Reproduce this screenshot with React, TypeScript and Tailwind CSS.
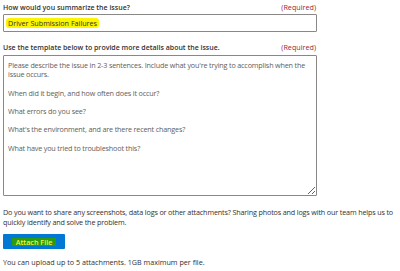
const template =
  "Please describe the issue in 2-3 sentences. Include what you're trying to accomplish when the issue occurs.\n\n" +
  "When did it begin, and how often does it occur?\n\n" +
  "What errors do you see?\n\n" +
  "What's the environment, and are there recent changes?\n\n" +
  "What have you tried to troubleshoot this?";

export default function App() {
  return (
    <div className="w-[400px] h-[271px] bg-white overflow-hidden text-[#323130] font-['Open_Sans',sans-serif] text-[7.2px] leading-[9px]">
      <div className="w-[314px] ml-[3px] pt-[2px]">
        <div className="flex justify-between h-[10px] items-center">
          <span className="font-semibold text-[7px]">How would you summarize the issue?</span>
          <span className="text-[#a4262c] mr-[1px]">(Required)</span>
        </div>
        <div className="mt-[2px] h-[18px] border border-[#8a8886] rounded-[1px] flex items-center px-[2px]">
          <span className="bg-[#fcf500] px-[2px] leading-[10px] rounded-[3px]">Driver Submission Failures</span>
        </div>
        <div className="flex justify-between h-[10px] items-center mt-[10px]">
          <span className="font-semibold text-[7px]">Use the template below to provide more details about the issue.</span>
          <span className="text-[#a4262c] mr-[1px]">(Required)</span>
        </div>
        <textarea
          readOnly
          className="block mt-[3px] w-full h-[141px] border border-[#8a8886] rounded-[1px] pl-[4px] pr-[2px] pt-[5px] text-[#605e5c] text-[7.2px] leading-[9.2px] tracking-[-0.16px] font-['Open_Sans',sans-serif] outline-none resize-y"
          defaultValue={template}
        />
      </div>
      <p className="ml-[3px] mt-[11px] w-[397px] leading-[10px] tracking-[-0.15px]">
        Do you want to share any screenshots, data logs or other attachments? Sharing photos and logs with our team helps us to quickly identify and solve the problem.
      </p>
      <button className="ml-[3px] mt-[7px] w-[62px] h-[15px] bg-[#0078d4] rounded-[1px] flex items-center justify-center">
        <span className="bg-[#2d9a14] text-[#f5f531] font-semibold px-[4px] leading-[8px]">Attach File</span>
      </button>
      <p className="ml-[3px] mt-[9px]">You can upload up to 5 attachments. 1GB maximum per file.</p>
    </div>
  );
}
